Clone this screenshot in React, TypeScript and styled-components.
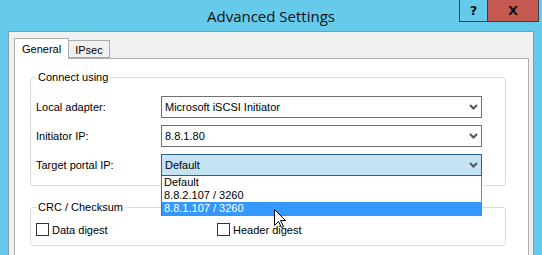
import React from "react";
import styled, { createGlobalStyle } from "styled-components";

const GlobalStyle = createGlobalStyle`
  html, body {
    margin: 0;
    padding: 0;
    background: #66cbea;
  }
  * {
    box-sizing: border-box;
  }
`;

const FONT = `"Liberation Sans", Arial, sans-serif`;

export default function App() {
  return (
    <>
      <GlobalStyle />
      <Window>
        <TitleBar>
          <span />
          <Title>Advanced Settings</Title>
          <Controls>
            <CaptionButton>?</CaptionButton>
            <CaptionButton $close>X</CaptionButton>
          </Controls>
        </TitleBar>
        <Client>
          <TabStrip>
            <Tab $active>General</Tab>
            <Tab>IPsec</Tab>
          </TabStrip>
          <Panel>
            <Group>
              <Legend>Connect using</Legend>
              <FormGrid>
                <Label>Local adapter:</Label>
                <Combo value="Microsoft iSCSI Initiator" />
                <Label>Initiator IP:</Label>
                <Combo value="8.8.1.80" />
                <Label>Target portal IP:</Label>
                <ComboWrap>
                  <Combo value="Default" open />
                  <DropList>
                    <ListItem>Default</ListItem>
                    <ListItem>8.8.2.107 / 3260</ListItem>
                    <ListItem $selected>8.8.1.107 / 3260</ListItem>
                  </DropList>
                </ComboWrap>
              </FormGrid>
            </Group>
            <Group $second>
              <Legend>CRC / Checksum</Legend>
              <CheckRow>
                <CheckItem>
                  <Box />
                  Data digest
                </CheckItem>
                <CheckItem>
                  <Box />
                  Header digest
                </CheckItem>
              </CheckRow>
            </Group>
          </Panel>
        </Client>
        <Cursor viewBox="0 0 12 19" width="12" height="19">
          <path
            d="M0.5 0.5 L0.5 16.5 L4.5 12.5 L7.5 18.5 L9.5 17.5 L6.5 11.5 L11.5 11.5 Z"
            fill="#fff"
            stroke="#000"
            strokeWidth="1"
          />
        </Cursor>
      </Window>
    </>
  );
}

function Combo({ value, open = false }: { value: string; open?: boolean }) {
  return (
    <ComboBox $open={open}>
      <ComboText>{value}</ComboText>
      <svg width="9" height="6" viewBox="0 0 9 6">
        <polyline points="1,1 4.5,4.5 8,1" fill="none" stroke="#555" strokeWidth="2" />
      </svg>
    </ComboBox>
  );
}

const Window = styled.div`
  position: relative;
  width: 542px;
  height: 255px;
  overflow: hidden;
  background: #66cbea;
  padding: 0 8px;
  display: flex;
  flex-direction: column;
  font-family: ${FONT};
  font-size: 11px;
  color: #000;
`;

const TitleBar = styled.div`
  height: 31px;
  margin: 0 -8px;
  display: grid;
  grid-template-columns: 1fr auto 1fr;
  align-items: center;
`;

const Title = styled.div`
  font-family: "Open Sans", "Noto Sans", sans-serif;
  font-size: 15px;
  color: #111;
  padding-top: 1px;
`;

const Controls = styled.div`
  align-self: start;
  justify-self: end;
  display: flex;
  margin-right: 3px;
`;

const CaptionButton = styled.div<{ $close?: boolean }>`
  width: ${(p) => (p.$close ? "51px" : "29px")};
  height: 22px;
  display: flex;
  align-items: center;
  justify-content: center;
  background: ${(p) => (p.$close ? "#c75a50" : "transparent")};
  border: 1px solid #2f3f48;
  border-top: none;
  border-left: ${(p) => (p.$close ? "none" : "1px solid #2f3f48")};
  font-family: "DejaVu Sans", sans-serif;
  font-weight: bold;
  font-size: 13px;
  color: #111;
`;

const Client = styled.div`
  flex: 1;
  background: #f0f0f0;
  border: 1px solid #8a9aa3;
  border-bottom: none;
  padding: 6px 4px 0 5px;
  display: flex;
  flex-direction: column;
`;

const TabStrip = styled.div`
  display: flex;
  align-items: flex-end;
  height: 20px;
`;

const Tab = styled.div<{ $active?: boolean }>`
  position: relative;
  z-index: 1;
  height: ${(p) => (p.$active ? "21px" : "18px")};
  margin-bottom: ${(p) => (p.$active ? "-1px" : "0")};
  padding: ${(p) => (p.$active ? "0 7px 0 7px" : "2px 6px 0 6px")};
  background: ${(p) => (p.$active ? "#fff" : "#f0f0f0")};
  border: 1px solid #acacac;
  border-bottom: ${(p) => (p.$active ? "none" : "1px solid #acacac")};
  border-left: ${(p) => (p.$active ? "1px solid #acacac" : "none")};
  display: flex;
  align-items: center;
  font-size: 11px;
`;

const Panel = styled.div`
  flex: 1;
  background: #fff;
  border: 1px solid #acacac;
  border-bottom: none;
  padding: 11px 22px 0 15px;
`;

const Group = styled.fieldset<{ $second?: boolean }>`
  margin: ${(p) => (p.$second ? "14px 0 0 0" : "0")};
  border: 1px solid #dcdcdc;
  border-radius: 3px;
  padding: ${(p) => (p.$second ? "9px 5px 9px 5px" : "12px 5px 9px 5px")};
`;

const Legend = styled.legend`
  margin-left: 0;
  padding: 0 2px;
  line-height: 14px;
  font-size: 11px;
`;

const FormGrid = styled.div`
  display: grid;
  grid-template-columns: 125px 321px;
  row-gap: 7px;
  align-items: center;
`;

const Label = styled.div`
  font-size: 11px;
`;

const ComboWrap = styled.div`
  position: relative;
`;

const ComboBox = styled.div<{ $open: boolean }>`
  height: 22px;
  display: flex;
  align-items: center;
  justify-content: space-between;
  padding: 0 3px 0 3px;
  background: ${(p) => (p.$open ? "#c4e4f6" : "#fff")};
  border: 1px solid ${(p) => (p.$open ? "#2b5f84" : "#707070")};
`;

const ComboText = styled.span`
  font-size: 11px;
`;

const DropList = styled.div`
  position: absolute;
  top: 100%;
  left: 0;
  width: 100%;
  z-index: 2;
  background: #fff;
  border: 1px solid #1ea4d8;
  border-left-color: #646464;
  border-top: none;
`;

const ListItem = styled.div<{ $selected?: boolean }>`
  height: 13px;
  line-height: 13px;
  padding-left: 2px;
  background: ${(p) => (p.$selected ? "#3399ff" : "transparent")};
  color: ${(p) => (p.$selected ? "#fff" : "#000")};
  font-size: 11px;
`;

const CheckRow = styled.div`
  display: grid;
  grid-template-columns: 181px auto;
`;

const CheckItem = styled.label`
  display: flex;
  align-items: center;
  gap: 3px;
  font-size: 11px;
`;

const Box = styled.span`
  width: 13px;
  height: 13px;
  border: 1px solid #333;
  background: #fff;
`;

const Cursor = styled.svg`
  position: absolute;
  left: 274px;
  top: 209px;
  z-index: 5;
`;
